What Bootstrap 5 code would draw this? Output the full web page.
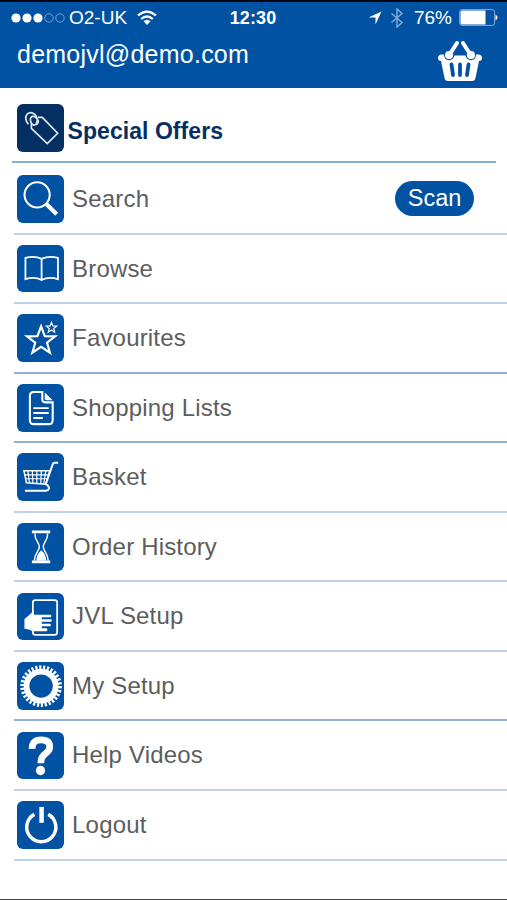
<!DOCTYPE html>
<html lang="en">
<head>
<meta charset="utf-8">
<meta name="viewport" content="width=device-width, initial-scale=1">
<title>JVL menu</title>
<link href="https://cdn.jsdelivr.net/npm/bootstrap@5.3.0/dist/css/bootstrap.min.css" rel="stylesheet">
<style>
body{font-family:"Liberation Sans",Arial,sans-serif;background:#fff;height:900px;overflow:hidden;line-height:1}
svg{display:block;flex:none}
.app-head{background:#0152a2;border-top:2px solid #000816;height:88.4px}
.status-line{height:31px;padding-left:11px;padding-right:9px;font-size:19px}
.status-line>div{flex:1 1 0}
.carrier{margin-left:4px}
.wifi{margin-left:9px}
.clock{font-size:18px;letter-spacing:.1px;margin-left:-3px}
.bt{margin-left:8px}
.pct{margin-left:10px}
.batt{margin-left:7px}
.account-line{padding:1px 24px 0 17px;font-size:25px;letter-spacing:.24px}
.account-line span{padding-top:8px}
.account-line svg{margin-top:6px}
.menu-item{height:69.55px;margin-left:13.5px;padding:0 33px 9.7px 3px;border-bottom:2px solid #bfd2e8;color:#5d5d5d;font-size:24px;letter-spacing:.17px}
.menu-item.strong-rule{border-color:#8eb2d8}
.menu-item.first{height:74.2px;margin-left:12px;margin-right:11px;padding:0 0 9px 4.5px;font-size:23px;color:#042f62;border-color:#86afd6;letter-spacing:.05px}
.menu-item.second{height:72px}
.tile{width:47.6px;height:47.6px;border-radius:6px;background:#0152a2;margin-right:8px;flex:none}
.first .tile{background:#042f62;margin-right:3.5px}
.tile svg{width:100%;height:100%;fill:none;stroke:#fff}
.label-text{height:47.6px;display:flex;align-items:center}
.first .label-text{padding-top:8px}
.scan{background:#0152a2;color:#fff;width:79px;height:35px;font-size:23.5px;letter-spacing:0;margin-bottom:6.5px}
.foot{border-top:1px solid #444;height:1px}
</style>
</head>
<body class="d-flex flex-column">
<header class="app-head text-white flex-shrink-0">
  <div class="status-line d-flex align-items-center">
    <div class="d-flex align-items-center">
      <svg width="54" height="12" viewBox="0 0 54 12"><g fill="#fff"><circle cx="5" cy="6" r="4.6"/><circle cx="16" cy="6" r="4.6"/><circle cx="27" cy="6" r="4.6"/></g><g fill="none" stroke="#6f9fd0"><circle cx="38" cy="6" r="4.2"/><circle cx="49" cy="6" r="4.2"/></g></svg>
      <span class="carrier">O2-UK</span>
      <svg class="wifi" width="22" height="16" viewBox="0 0 22 16"><g fill="none" stroke="#fff" stroke-width="2.3"><path d="M2 5.5Q11-2.3 20 5.5M5.2 9Q11 4 16.800 9"/></g><path d="M7.500 11.300Q11 8.300 14.500 11.300L11 15Z" fill="#fff"/></svg>
    </div>
    <strong class="clock">12:30</strong>
    <div class="d-flex align-items-center justify-content-end">
      <svg width="14" height="14" viewBox="0 0 14 14"><path d="M.5 6.500L13.500.5 7.500 13.500V6.500Z" fill="#fff"/></svg>
      <svg class="bt" width="14" height="20" viewBox="0 0 14 20"><path d="M1.500 5.500L12 14.500 7 19V1L12 5.500 1.500 14.500" fill="none" stroke="#7fabd8" stroke-width="1.500"/></svg>
      <span class="pct">76%</span>
      <svg class="batt" width="39" height="17" viewBox="0 0 39 17"><rect x=".6" y=".6" width="35" height="15.800" rx="2.500" fill="none" stroke="#83addb"/><path d="M3 1.500H26.500V15.500H3Q1.500 15.500 1.500 14V3Q1.500 1.500 3 1.500" fill="#fff"/><path d="M36.500 5.500Q40.500 8.500 36.500 11.500Z" fill="#fff"/></svg>
    </div>
  </div>
  <div class="account-line d-flex justify-content-between align-items-start">
    <span>demojvl@demo.com</span>
    <svg width="46" height="42" viewBox="0 0 46 42"><path d="M12 15.500L20 3M34 15.500L26 3" stroke="#fff" stroke-width="4" stroke-linecap="round"/><path d="M4 14.500H42Q45 15 45 18T42 21L38.500 38Q38 41 35 41H11Q8 41 7.500 38L4 21Q1 21 1 18T4 14.500Z" fill="#fff"/><path d="M16.500 13.500H29.500V15.500H16.500Z" fill="#0152a2"/><path d="M7.500 13.500Q7.500 19.500 12 19.500T17 14.300M38.500 13.500Q38.500 19.500 34 19.500T29 14.300" fill="none" stroke="#0152a2" stroke-width="1.300"/><circle cx="12" cy="15" r="3.900" fill="#fff"/><circle cx="34" cy="15" r="3.900" fill="#fff"/><path d="M14.500 24.500L16 35M23 24.500V35M31.500 24.500L30 35" stroke="#0152a2" stroke-width="3.800" stroke-linecap="round"/></svg>
  </div>
</header>
<main class="flex-grow-1">
  <div class="menu-item first d-flex align-items-end fw-bold">
    <div class="tile"><svg viewBox="0 0 48 48"><g stroke="#dce8f5" stroke-width="1.700"><path d="M21 13.500H25.500L41 29.500 30.500 40 14.500 24.500 14.500 20"/><path d="M11.500 20.500Q7 15 10 10.500Q13.500 7 18 10.500Q22 15 19.500 20Q17 23 14.500 19.500Q12 14 15.500 12.500Q19 12 21.500 17Q21.500 20 19 21"/></g></svg></div>
    <span class="label-text">Special Offers</span>
  </div>
  <div class="menu-item second d-flex align-items-end">
    <div class="tile"><svg viewBox="0 0 48 48"><circle cx="20.300" cy="20" r="12.700" stroke-width="2.100"/><path d="M29.300 29L40 39.500" stroke-width="4.200"/></svg></div>
    <span class="label-text">Search</span>
    <button class="scan btn rounded-pill border-0 p-0 ms-auto">Scan</button>
  </div>
  <div class="menu-item d-flex align-items-end">
    <div class="tile"><svg viewBox="0 0 48 48"><path d="M24.800 14Q18 10.500 8.500 13V34.500Q18 31.500 24.800 35.300Q32 31.500 41.300 34.500V13Q32 10.500 24.800 14V35" stroke-width="1.800"/></svg></div>
    <span class="label-text">Browse</span>
  </div>
  <div class="menu-item strong-rule d-flex align-items-end">
    <div class="tile"><svg viewBox="0 0 48 48"><path d="M24.300 12.500L28 22.300 38.500 22.500 30.300 29 33.200 39 24.300 33.200 15.500 39 18.400 29 10 22.500 20.600 22.300Z" stroke-width="2.200"/><path d="M34.800 8.500L36.200 12 40 12.200 37.100 14.600 38 18.300 34.800 16.200 31.500 18.300 32.500 14.600 29.600 12.200 33.400 12Z" stroke-width="1.200"/></svg></div>
    <span class="label-text">Favourites</span>
  </div>
  <div class="menu-item strong-rule d-flex align-items-end">
    <div class="tile"><svg viewBox="0 0 48 48"><path d="M25.500 8H17Q13 8 13 12V36.500Q13 40.500 17 40.500H32Q36 40.500 36 36.500V18.500H28.500Q25.500 18.500 25.500 15.500Z" stroke-width="2.100"/><path d="M28 8.500L36 16.500H30Q28 16.500 28 14.500Z" fill="#fff" stroke="none"/><path d="M16.500 24.300H32M16.500 29.300H32M16.500 34.300H26" stroke-width="1.900"/></svg></div>
    <span class="label-text">Shopping Lists</span>
  </div>
  <div class="menu-item d-flex align-items-end">
    <div class="tile"><svg viewBox="0 0 48 48"><path d="M7 18H33L29 31.500 9.500 30Z" stroke-width="1.500"/><path d="M8 22H31.500M8.700 26H30.500M11 18L12.500 30M15.500 18L16 30.500M20 18V30.500M24.500 18L24 31M29 18L27 31" stroke-width="1.200"/><path d="M41.500 9.800H38Q36.500 9.800 36 11.500L29 31.500Q33 33.500 32 36.500Q31.500 38 29 38H8" stroke-width="2"/></svg></div>
    <span class="label-text">Basket</span>
  </div>
  <div class="menu-item d-flex align-items-end">
    <div class="tile"><svg viewBox="0 0 48 48"><path d="M15 9H33.500M15 39.300H33.500" stroke-width="2.800"/><path d="M18 10.500C18 18 22.500 19.500 22.500 24S17.500 31 17.500 38M31 10.500C31 18 26.500 19.500 26.500 24S31.500 31 31.500 38" stroke-width="1.500"/><path d="M19.500 38Q19.500 32 24.500 27.500Q29.500 32 29.500 38Z" fill="#fff" stroke="none"/></svg></div>
    <span class="label-text">Order History</span>
  </div>
  <div class="menu-item d-flex align-items-end">
    <div class="tile"><svg viewBox="0 0 48 48"><rect x="16" y="7.200" width="24.500" height="35" rx="2.500" stroke-width="1.800"/><path d="M17 18V22H34Q35.500 23.200 34 24.500H25V26.500H34.500Q36 27.800 34.500 29H25V31H33.500Q35 32.200 33.500 33.500H25V35.500H30Q31.500 37 30 38.500H17Q14 38.500 13 37L7.500 36V26.500Z" fill="#fff" stroke="none"/></svg></div>
    <span class="label-text">JVL Setup</span>
  </div>
  <div class="menu-item strong-rule d-flex align-items-end">
    <div class="tile"><svg viewBox="0 0 48 48"><circle cx="24.300" cy="24.300" r="14.700" stroke-width="5.800"/><circle cx="24.300" cy="24.300" r="19" stroke-width="4" pathLength="90" stroke-dasharray="1.700 1.300"/></svg></div>
    <span class="label-text">My Setup</span>
  </div>
  <div class="menu-item d-flex align-items-end">
    <div class="tile"><svg viewBox="0 0 48 48"><path d="M15.300 17Q15 8 24.300 8Q33 8 33 15Q33 19 28.500 22Q24 25 24 31.500" stroke-width="6.800"/><circle cx="23.700" cy="38.800" r="4.700" fill="#fff" stroke="none"/></svg></div>
    <span class="label-text">Help Videos</span>
  </div>
  <div class="menu-item d-flex align-items-end">
    <div class="tile"><svg viewBox="0 0 48 48"><path d="M17.500 13.500A14.700 14.700 0 1 0 31.500 13.500" stroke-width="3.500"/><path d="M24.800 6V22" stroke-width="4.500"/></svg></div>
    <span class="label-text">Logout</span>
  </div>
</main>
<div class="foot flex-shrink-0"></div>
<script src="https://cdn.jsdelivr.net/npm/bootstrap@5.3.0/dist/js/bootstrap.bundle.min.js"></script>
</body>
</html>
